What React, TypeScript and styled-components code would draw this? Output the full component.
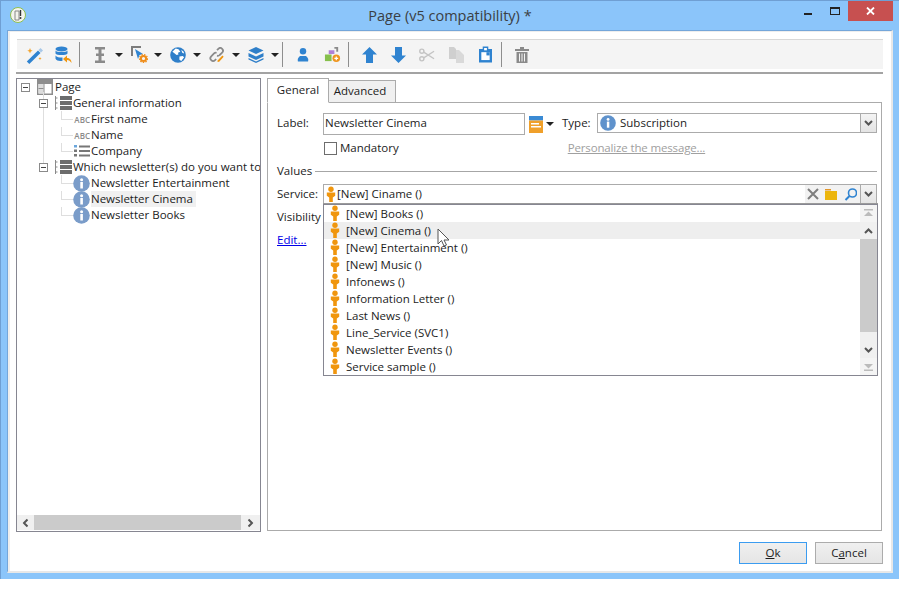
import React from "react";
import styled, { createGlobalStyle } from "styled-components";

const Global = createGlobalStyle`
  html, body { margin: 0; padding: 0; background: #fff; }
  body { width: 912px; height: 591px; overflow: hidden; font-family: "Open Sans", "Noto Sans", "Liberation Sans", sans-serif; font-size: 11.5px; color: #1c1c1c; }
`;

const Window = styled.div`
  width: 899px; height: 579px; box-sizing: border-box;
  background: #8bc5fa; border-top: 1px solid #6f9fd3; border-left: 1px solid #6f9fd3;
  display: flex; flex-direction: column; position: relative;
`;
const TitleBar = styled.div`
  height: 29px; flex: none; display: flex; align-items: flex-start; position: relative;
`;
const AppLogo = styled.svg`
  margin: 6px 0 0 9px; flex: none;
`;
const Title = styled.div`
  position: absolute; left: 0; right: 0; top: 5px; text-align: center; font-size: 14.5px; line-height: 20px; color: #3a3f44;
`;
const WinButtons = styled.div`
  margin-left: auto; display: flex; align-items: flex-start; margin-right: 6px;
`;
const MinBtn = styled.div`
  width: 8px; height: 2px; background: #222; margin: 12px 18px 0 0;
`;
const MaxBtn = styled.div`
  width: 8px; height: 5px; border: 1px solid #222; border-top-width: 2px; margin: 6px 8px 0 0;
`;
const CloseBtn = styled.div`
  width: 45px; height: 20px; background: #c75050; display: flex; align-items: center; justify-content: center;
`;

const Content = styled.div`
  flex: 1; margin: 0 6px 6px 6px; background: #fff; box-sizing: border-box; border-top: 1px solid #74a6da; border-left: 1px solid #74a6da;
  border-right: 2px solid #e8e8e8; border-bottom: 2px solid #e8e8e8; padding: 8px 8px 0 8px;
  display: flex; flex-direction: column; box-shadow: inset 2px 0 0 #eeeeee, inset 0 1px 0 #eeeeee;
`;
const ToolbarWrap = styled.div`
  height: 35px; flex: none; box-sizing: border-box; border-bottom: 2px solid #a3a3a3; padding-left: 1px;
`;
const Toolbar = styled.div`
  height: 30px; box-sizing: border-box; background: #f4f4f4; border-top: 1px solid #d8d8d8; display: flex; align-items: center; padding-left: 9px;
`;
const ToolIcon = styled.div<{ $w: number }>`
  width: ${(p) => p.$w}px; height: 22px; display: flex; align-items: center; justify-content: flex-start; flex: none;
`;
const Caret = styled.div<{ $mr?: number }>`
  width: 0; height: 0; border-left: 4px solid transparent; border-right: 4px solid transparent; border-top: 4px solid #222; flex: none; margin-right: ${(p) => p.$mr ?? 0}px;
`;
const ToolSep = styled.div<{ $mr?: number; $ml?: number }>`
  width: 1px; height: 25px; background: #8e8e8e; flex: none; margin-left: ${(p) => p.$ml ?? 0}px; margin-right: ${(p) => p.$mr ?? 0}px;
`;
const Main = styled.div`
  flex: none; display: flex; margin-top: 4px; height: 454px; gap: 6px;
`;
const TreePanel = styled.div`
  width: 245px; height: 454px; box-sizing: border-box; border: 1px solid #868691; display: flex; flex-direction: column; flex: none; background: #fff;
`;
const TreeBody = styled.div`
  flex: 1; overflow: hidden;
`;
const indent = [4, 22, 56];
const Row = styled.div<{ $level: number }>`
  height: 16px; display: flex; align-items: center; position: relative; white-space: nowrap; padding-left: ${(p) => indent[p.$level]}px;
`;
const Toggle = styled.div`
  width: 9px; height: 9px; box-sizing: border-box; border: 1px solid #8a8a8a; background: #fff; position: relative; flex: none; margin-right: 7px;
  &::after { content: ""; position: absolute; left: 1px; right: 1px; top: 3px; height: 1px; background: #444; }
`;
const Stub = styled.div<{ $w: number }>`
  width: ${(p) => p.$w}px; height: 1px; flex: none;
`;
const Guide = styled.div<{ $x: number; $top: number; $h: number; $w?: number }>`
  position: absolute; left: ${(p) => p.$x}px; top: ${(p) => p.$top}px; width: ${(p) => p.$w ?? 1}px; height: ${(p) => p.$h}px; background: #dedede;
`;
const TreeLabel = styled.span<{ $sel?: boolean }>`
  line-height: 16px; padding: 0 ${(p) => (p.$sel ? 3 : 0)}px 0 0; background: ${(p) => (p.$sel ? "#f0f0f0" : "transparent")};
`;
const HBar = styled.div`
  height: 15px; display: flex; background: #f0f0f0; flex: none; align-items: stretch; margin-bottom: 1px;
`;
const HBtn = styled.div<{ $w: number }>`
  width: ${(p) => p.$w}px; display: flex; align-items: center; justify-content: center; flex: none;
`;
const HThumb = styled.div`
  flex: 1; background: #cbcbcb;
`;
const Right = styled.div`
  width: 616px; flex: none; display: flex; flex-direction: column; position: relative;
`;
const TabBar = styled.div`
  display: flex; align-items: flex-end; height: 25px; margin-bottom: -1px; position: relative; z-index: 1; flex: none;
`;
const Tab = styled.div<{ $active?: boolean }>`
  box-sizing: border-box; height: ${(p) => (p.$active ? 25 : 23)}px; width: ${(p) => (p.$active ? 62 : 67)}px; display: flex; align-items: center; justify-content: center;
  background: ${(p) => (p.$active ? "#fff" : "#f0f0f0")}; border: 1px solid #ababab; border-bottom-color: ${(p) => (p.$active ? "#fff" : "#ababab")};
  border-left-width: ${(p) => (p.$active ? 1 : 0)}px; padding: 0 ${(p) => (p.$active ? 0 : 4)}px 2px 0;
`;
const TabPanel = styled.div`
  box-sizing: border-box; width: 615px; height: 429px; border: 1px solid #ababab; padding: 10px 4px 0 9px; display: flex; flex-direction: column; flex: none;
`;
const FormRow = styled.div<{ $h: number; $mt?: number }>`
  display: flex; align-items: center; height: ${(p) => p.$h}px; margin-top: ${(p) => p.$mt ?? 0}px; flex: none; white-space: nowrap;
`;
const FieldLabel = styled.span<{ $lift?: number }>`
  width: 46px; flex: none; padding-bottom: ${(p) => p.$lift ?? 2}px;
`;
const RowText = styled.span`
  padding-bottom: 2px;
`;
const TextInput = styled.div`
  width: 202px; height: 22px; box-sizing: border-box; border: 1px solid #ababab; padding: 0 0 4px 1px; display: flex; align-items: center; flex: none;
`;
const TypeLabel = styled.span`
  margin: 0 6px 0 8px; width: 29px; flex: none; padding-bottom: 4px;
`;
const Combo = styled.div<{ $w: number }>`
  width: ${(p) => p.$w}px; height: 20px; box-sizing: border-box; border: 1px solid #ababab; display: flex; align-items: center; flex: none; background: #fff;
  align-self: flex-start;
`;
const ComboText = styled.div<{ $gap: number }>`
  flex: 1; display: flex; align-items: center; gap: ${(p) => p.$gap}px; padding-left: 2px;
`;
const ComboArrow = styled.div`
  width: 16px; height: 100%; box-sizing: border-box; border-left: 1px solid #ababab; background: linear-gradient(#f4f4f4, #e4e4e4);
  display: flex; align-items: center; justify-content: center; flex: none;
`;
const ComboTools = styled.div`
  display: flex; align-items: center; gap: 6px; height: 100%; background: #f2f2f2; padding: 0 3px 0 2px; flex: none;
`;
const CheckBox = styled.div`
  width: 13px; height: 13px; box-sizing: border-box; border: 1px solid #6d6d6d; background: #fff; margin-left: 47px; margin-right: 3px; flex: none;
`;
const DisabledLink = styled.span`
  color: #a0a0a0; text-decoration: underline; margin-left: 169px; padding-bottom: 2px; letter-spacing: -0.15px;
`;
const SectionTitle = styled.div`
  display: flex; align-items: center; gap: 3px; height: 16px; margin-top: 7px; flex: none;
  span { padding-bottom: 2px; }
  &::after { content: ""; flex: 1; height: 1px; background: #a6a6a6; }
`;
const BlueLink = styled.a`
  color: #0000e8; text-decoration: underline; padding-bottom: 2px;
`;
const Dropdown = styled.div`
  position: absolute; left: 56px; top: 126px; width: 555px; height: 172px; box-sizing: border-box; background: #fff; border: 1px solid #868691; z-index: 3;
  display: flex; box-shadow: 0 -1px 0 #9a9a9a;
`;
const DropList = styled.div`
  flex: 1; display: flex; flex-direction: column;
`;
const DropItem = styled.div<{ $hover?: boolean }>`
  height: 17px; flex: none; display: flex; align-items: center; gap: 6px; padding-left: 6px; white-space: nowrap; background: ${(p) => (p.$hover ? "#eeeeee" : "transparent")};
`;
const VBar = styled.div`
  width: 17px; flex: none; display: flex; flex-direction: column; background: #f0f0f0;
`;
const VBtn = styled.div<{ $white?: boolean }>`
  height: 17px; flex: none; display: flex; align-items: center; justify-content: center; background: ${(p) => (p.$white ? "#f4f4f4" : "#f0f0f0")};
`;
const VThumb = styled.div`
  height: 93px; background: #cbcbcb; flex: none;
`;
const VTrack = styled.div`
  flex: 1;
`;
const Cursor = styled.svg`
  position: absolute; left: 170px; top: 150px; z-index: 4;
`;
const Footer = styled.div`
  flex: none; display: flex; justify-content: flex-end; gap: 8px; margin-top: 10px;
`;
const Btn = styled.div<{ $primary?: boolean }>`
  width: 68px; height: 22px; box-sizing: border-box; border: 1px solid ${(p) => (p.$primary ? "#3b9cf0" : "#acacac")}; background: linear-gradient(#f0f0f0, #e5e5e5);
  display: flex; align-items: center; justify-content: center; padding-bottom: 1px; u { text-underline-offset: 1px; }
`;
const AbcTag = styled.span`
  font-size: 8px; font-weight: 600; color: #8a8a8a; width: 17px; margin-right: 1px; flex: none; text-align: right;
`;

const Person = () => (
  <svg width="10" height="17" viewBox="0 0 10 17" style={{ flex: "none" }}>
    <circle cx="5" cy="3.200" r="2.700" fill="#f0960e" />
    <path d="M.8 6.500h8.400v3.200L6.800 11.500V16H3.200v-4.500L.8 9.700z" fill="#f0960e" />
  </svg>
);
const InfoIcon = ({ size = 17, fill = "#7a9cc9" }: { size?: number; fill?: string }) => (
  <svg width={size} height={size} viewBox="0 0 17 17" style={{ flex: "none" }}>
    <circle cx="8.500" cy="8.500" r="8.300" fill={fill} />
    <rect x="7.300" y="7" width="2.600" height="6.500" fill="#fff" />
    <circle cx="8.600" cy="4.700" r="1.500" fill="#fff" />
  </svg>
);
const Chevron = ({ dir = "down", color = "#555" }: { dir?: "up" | "down" | "left" | "right"; color?: string }) => {
  const r = { down: 0, up: 180, left: 90, right: -90 }[dir];
  return (
    <svg width="9" height="6" viewBox="0 0 9 6" style={{ transform: `rotate(${r}deg)` }}>
      <path d="M1 1l3.500 3.500L8 1" fill="none" stroke={color} strokeWidth="2" />
    </svg>
  );
};
const End = ({ down }: { down?: boolean }) => (
  <svg width="9" height="9" viewBox="0 0 9 9" style={{ transform: down ? "rotate(180deg)" : undefined }}>
    <rect x="0" y="0" width="9" height="1.500" fill="#bbb" />
    <path d="M4.500 2.500L9 7H0z" fill="#bbb" />
  </svg>
);

const Wand = () => (
  <svg width="18" height="18" viewBox="0 0 18 18">
    <path d="M.8 15.500L12 4.500l2.500 2.500L3.300 18z" fill="#2f83d0" />
    <path d="M12.500 4l2-2 2.500 2.500-2 2z" fill="#a8c8e8" />
    <path d="M4 2l.8 1.900 1.900.8-1.900.8L4 7.400l-.8-1.900-1.900-.8 1.900-.8z" fill="#f3a32c" />
    <path d="M14 11l.5 1.100 1.100.5-1.100.5-.5 1.100-.5-1.100-1.100-.5 1.100-.5z" fill="#f3a32c" />
  </svg>
);
const DbIcon = () => (
  <svg width="17" height="17" viewBox="0 0 17 17">
    <ellipse cx="6.500" cy="3" rx="6" ry="2.500" fill="#2f83d0" />
    <path d="M.5 4.500c1 2 11 2 12 0v3c-1 2-11 2-12 0z" fill="#2f83d0" />
    <path d="M.5 9.500c1 2 6 2.200 7 2v3.300c-3 .5-6 0-7-2z" fill="#2f83d0" />
    <path d="M16.500 17c0-3.500-2-5-4.500-5V9.500L8 13l4 3.400V14c2 0 3.200 1 4.500 3z" fill="#f0960e" />
  </svg>
);
const IBeam = () => (
  <svg width="12" height="16" viewBox="0 0 12 16">
    <path d="M1 0h10v2.500H7.500v4H10v2.500H7.500v4.500H11V16H1v-2.500h3.500V9H2V6.500h2.500v-4H1z" fill="#8a8a8a" />
  </svg>
);
const CursorGear = () => (
  <svg width="17" height="17" viewBox="0 0 17 17">
    <path d="M0 0h10v2H2v8H0z" fill="#7c7c7c" />
    <path d="M4 3l8 5-3.500 1L7 13z" fill="#2f83d0" />
    <circle cx="12.500" cy="12.500" r="2.600" fill="none" stroke="#ef8d1a" strokeWidth="2" />
    <circle cx="12.500" cy="12.500" r="4" fill="none" stroke="#ef8d1a" strokeWidth="1.200" strokeDasharray="1.500 1.200" />
  </svg>
);
const Globe = () => (
  <svg width="16" height="16" viewBox="0 0 17 17">
    <circle cx="8.500" cy="8.500" r="8.300" fill="#2f7fc9" />
    <path d="M6 1.500l3 1 2 2.500-2.500 1L9 8l-2 .5L4 6 2.500 5zM10 10l3.500-.5L15 11l-3 4-2-1.500zM12 3l2.500 2 .5 2-2-1z" fill="#fff" />
  </svg>
);
const LinkIcon = () => (
  <svg width="16" height="16" viewBox="0 0 18 18">
    <path d="M9 3.500l1.500-1.500a3 3 0 0 1 4.300 4.300L12 9a3 3 0 0 1-3 .8" fill="none" stroke="#8a8a8a" strokeWidth="2" />
    <path d="M8.500 6.500a3 3 0 0 0-2.800.8L2.500 10.500a3 3 0 0 0 4.300 4.300L8 13.500" fill="none" stroke="#8a8a8a" strokeWidth="2" />
    <path d="M10 15l5-5.500 1.500 1.500-5 5.500-2 .5z" fill="#f0960e" />
  </svg>
);
const Boxes = () => (
  <svg width="16" height="16" viewBox="0 0 16 16">
    <path d="M8 0l7.500 3.500L8 7 .5 3.500z" fill="#2f7fc9" />
    <path d="M.5 6L8 9.500 15.500 6v3.500L8 13 .5 9.500z" fill="#2f7fc9" />
    <path d="M.5 11L8 14.500 15.500 11v1.500L8 16 .5 12.500z" fill="#2f7fc9" />
  </svg>
);
const PersonBlue = () => (
  <svg width="12" height="15" viewBox="0 0 13 15">
    <circle cx="6.500" cy="4" r="3.500" fill="#2f83d0" />
    <path d="M1 15c-1-4 2-6 3-6h5c1 0 4 2 3 6z" fill="#2f83d0" />
  </svg>
);
const Shapes = () => (
  <svg width="17" height="17" viewBox="0 0 18 18">
    <rect x="1" y="9" width="7" height="7" fill="#86bf4c" />
    <rect x="5" y="4.500" width="6" height="4" fill="#b07fd6" />
    <path d="M11 1h4v5h-2V3h-2z" fill="#8a8a8a" />
    <circle cx="13" cy="13" r="4" fill="#ef951e" />
    <path d="M11 13h4M13 11v4" stroke="#fff" strokeWidth="1.300" />
  </svg>
);
const ArrowV = ({ down }: { down?: boolean }) => (
  <svg width="15" height="16" viewBox="0 0 15 16" style={{ transform: down ? "rotate(180deg)" : undefined }}>
    <path d="M7.500 0L15 7.500h-4V16H4V7.500H0z" fill="#2f83d0" />
  </svg>
);
const Scissors = () => (
  <svg width="16" height="14" viewBox="0 0 17 14">
    <circle cx="3" cy="3" r="2.200" fill="none" stroke="#c4c4c4" strokeWidth="1.500" />
    <circle cx="3" cy="11" r="2.200" fill="none" stroke="#c4c4c4" strokeWidth="1.500" />
    <path d="M5 4l11 7M5 10l11-7" stroke="#c4c4c4" strokeWidth="1.500" />
  </svg>
);
const CopyIcon = () => (
  <svg width="15" height="16" viewBox="0 0 15 16">
    <path d="M0 0h5l2 2v10H0z" fill="#cfcfcf" />
    <path d="M7 3h3l5 5v8H7z" fill="#d9d9d9" />
  </svg>
);
const Clipboard = () => (
  <svg width="13" height="17" viewBox="0 0 14 17">
    <path d="M0 2.500h4V0h6v2.500h4V17H0z" fill="#2f83d0" />
    <rect x="5.500" y="1.500" width="3" height="2.500" fill="#fff" />
    <rect x="2.500" y="6" width="9" height="8.500" fill="#fff" />
    <path d="M8 6h3.500v3.500H8z" fill="#2f83d0" />
  </svg>
);
const Trash = () => (
  <svg width="14" height="16" viewBox="0 0 14 16">
    <path d="M0 2h5V0h4v2h5v2H0z" fill="#8a8a8a" />
    <path d="M1.500 5h11v11h-11z" fill="#8a8a8a" />
    <path d="M4.500 6.500v8M7 6.500v8M9.500 6.500v8" stroke="#f4f4f4" strokeWidth="1" />
  </svg>
);
const PageIcon = () => (
  <svg width="16" height="16" viewBox="0 0 16 16" style={{ flex: "none" }}>
    <rect width="16" height="16" fill="#8d8d8d" />
    <rect x="1.500" y="5" width="13" height="9.500" fill="#fff" />
    <rect x="1.500" y="5" width="5" height="9.500" fill="#dcdcdc" />
    <rect x="6.500" y="5" width="1" height="9.500" fill="#8d8d8d" />
    <rect x="1.500" y="9" width="5" height="1" fill="#8d8d8d" />
  </svg>
);
const GroupIcon = () => (
  <svg width="17" height="16" viewBox="0 0 17 16" style={{ flex: "none" }}>
    <path d="M.5 1v14M.5 3h2M.5 8h2M.5 13h2" stroke="#8a8a8a" strokeWidth="1" />
    <rect x="5" y="1" width="12" height="4" fill="#6c6c6c" />
    <rect x="5" y="6" width="12" height="4" fill="#6c6c6c" />
    <rect x="5" y="11" width="12" height="4" fill="#6c6c6c" />
  </svg>
);
const ListIcon = () => (
  <svg width="18" height="12" viewBox="0 0 18 12" style={{ flex: "none" }}>
    <rect x="1" y="0" width="3" height="2.500" fill="#6aa6dc" />
    <rect x="1" y="4.500" width="3" height="2.500" fill="#777" />
    <rect x="1" y="9" width="3" height="2.500" fill="#777" />
    <rect x="6" y="0.500" width="11" height="2" fill="#777" />
    <rect x="6" y="5" width="11" height="2" fill="#777" />
    <rect x="6" y="9.500" width="11" height="2" fill="#777" />
  </svg>
);
const ListPick = () => (
  <svg width="14" height="17" viewBox="0 0 14 17" style={{ flex: "none" }}>
    <rect width="14" height="4.500" fill="#3a8ad4" />
    <rect y="4.500" width="14" height="12.500" fill="#f0a02a" />
    <rect x="2" y="7" width="8" height="1.500" fill="#fff" />
    <rect x="2" y="10" width="10" height="1.500" fill="#fff" />
  </svg>
);
const CloseX = () => (
  <svg width="9" height="8" viewBox="0 0 9 8">
    <path d="M1 .5l7 7M8 .5l-7 7" stroke="#fff" strokeWidth="1.800" />
  </svg>
);
const ClearX = () => (
  <svg width="12" height="12" viewBox="0 0 12 12">
    <path d="M1 1l10 10M11 1L1 11" stroke="#7e7e7e" strokeWidth="2" />
  </svg>
);
const Folder = () => (
  <svg width="12" height="11" viewBox="0 0 12 11">
    <path d="M0 0h6v1.500H0z" fill="#e2962a" />
    <path d="M0 2h12v9H0z" fill="#ecb50c" />
  </svg>
);
const Search = () => (
  <svg width="14" height="13" viewBox="0 0 14 13">
    <circle cx="9.500" cy="5" r="4" fill="none" stroke="#2f83d0" strokeWidth="1.600" />
    <path d="M6.500 8l-4 4" stroke="#2f83d0" strokeWidth="2" />
  </svg>
);

const services = [
  "[New] Books ()", "[New] Cinema ()", "[New] Entertainment ()", "[New] Music ()", "Infonews ()",
  "Information Letter ()", "Last News ()", "Line_Service (SVC1)", "Newsletter Events ()", "Service sample ()",
];

export default function App() {
  return (
    <>
      <Global />
      <Window>
        <TitleBar>
          <AppLogo width="16" height="16" viewBox="0 0 16 16">
            <circle cx="8" cy="8" r="7.500" fill="#f4f4ee" stroke="#8fbf4f" />
            <path d="M5 4h4v9H5z" fill="none" stroke="#888" />
            <path d="M10.500 3v6" stroke="#333" strokeWidth="1.400" />
            <circle cx="10.500" cy="11" r="1" fill="#333" />
          </AppLogo>
          <Title>Page (v5 compatibility) *</Title>
          <WinButtons>
            <MinBtn />
            <MaxBtn />
            <CloseBtn><CloseX /></CloseBtn>
          </WinButtons>
        </TitleBar>
        <Content>
          <ToolbarWrap>
            <Toolbar>
              <ToolIcon $w={29}><Wand /></ToolIcon>
              <ToolIcon $w={24}><DbIcon /></ToolIcon>
              <ToolSep $mr={14} />
              <ToolIcon $w={21}><IBeam /></ToolIcon>
              <Caret $mr={8} />
              <ToolIcon $w={23}><CursorGear /></ToolIcon>
              <Caret $mr={8} />
              <ToolIcon $w={23}><Globe /></ToolIcon>
              <Caret $mr={8} />
              <ToolIcon $w={23}><LinkIcon /></ToolIcon>
              <Caret $mr={8} />
              <ToolIcon $w={23}><Boxes /></ToolIcon>
              <Caret />
              <ToolSep $ml={3} $mr={14} />
              <ToolIcon $w={27}><PersonBlue /></ToolIcon>
              <ToolIcon $w={24}><Shapes /></ToolIcon>
              <ToolSep $mr={13} />
              <ToolIcon $w={29}><ArrowV /></ToolIcon>
              <ToolIcon $w={28}><ArrowV down /></ToolIcon>
              <ToolIcon $w={30}><Scissors /></ToolIcon>
              <ToolIcon $w={30}><CopyIcon /></ToolIcon>
              <ToolIcon $w={22}><Clipboard /></ToolIcon>
              <ToolSep $mr={13} />
              <ToolIcon $w={29}><Trash /></ToolIcon>
            </Toolbar>
          </ToolbarWrap>
          <Main>
            <TreePanel>
              <TreeBody>
                <Row $level={0}><Guide $x={26} $top={13} $h={71} /><Toggle /><PageIcon /><Stub $w={2} /><TreeLabel>Page</TreeLabel></Row>
                <Row $level={1}><Toggle /><GroupIcon /><Stub $w={1} /><TreeLabel>General information</TreeLabel></Row>
                <Row $level={2}><Guide $x={44} $top={0} $h={8} /><Guide $x={44} $top={8} $h={1} $w={12} /><AbcTag>ABC</AbcTag><TreeLabel>First name</TreeLabel></Row>
                <Row $level={2}><Guide $x={44} $top={0} $h={8} /><Guide $x={44} $top={8} $h={1} $w={12} /><AbcTag>ABC</AbcTag><TreeLabel>Name</TreeLabel></Row>
                <Row $level={2}><Guide $x={44} $top={0} $h={8} /><Guide $x={44} $top={8} $h={1} $w={12} /><ListIcon /><TreeLabel>Company</TreeLabel></Row>
                <Row $level={1}><Toggle /><GroupIcon /><Stub $w={1} /><TreeLabel>Which newsletter(s) do you want to</TreeLabel></Row>
                <Row $level={2}><Guide $x={44} $top={0} $h={8} /><Guide $x={44} $top={8} $h={1} $w={12} /><InfoIcon /><Stub $w={1} /><TreeLabel>Newsletter Entertainment</TreeLabel></Row>
                <Row $level={2}><Guide $x={44} $top={0} $h={8} /><Guide $x={44} $top={8} $h={1} $w={12} /><InfoIcon /><Stub $w={1} /><TreeLabel $sel>Newsletter Cinema</TreeLabel></Row>
                <Row $level={2}><Guide $x={44} $top={0} $h={8} /><Guide $x={44} $top={8} $h={1} $w={12} /><InfoIcon /><Stub $w={1} /><TreeLabel>Newsletter Books</TreeLabel></Row>
              </TreeBody>
              <HBar>
                <HBtn $w={17}><Chevron dir="left" /></HBtn>
                <HThumb />
                <HBtn $w={19}><Chevron dir="right" /></HBtn>
              </HBar>
            </TreePanel>
            <Right>
              <TabBar>
                <Tab $active>General</Tab>
                <Tab>Advanced</Tab>
              </TabBar>
              <TabPanel>
                <FormRow $h={22}>
                  <FieldLabel $lift={4}>Label:</FieldLabel>
                  <TextInput>Newsletter Cinema</TextInput>
                  <Stub $w={4} />
                  <ListPick />
                  <Stub $w={3} />
                  <Caret />
                  <TypeLabel>Type:</TypeLabel>
                  <Combo $w={280}>
                    <ComboText $gap={4}><InfoIcon size={16} fill="#5f92cc" /><RowText>Subscription</RowText></ComboText>
                    <ComboArrow><Chevron /></ComboArrow>
                  </Combo>
                </FormRow>
                <FormRow $h={16} $mt={5}>
                  <CheckBox />
                  <RowText>Mandatory</RowText>
                  <DisabledLink>Personalize the message...</DisabledLink>
                </FormRow>
                <SectionTitle><span>Values</span></SectionTitle>
                <FormRow $h={20} $mt={5}>
                  <FieldLabel>Service:</FieldLabel>
                  <Combo $w={554}>
                    <ComboText $gap={1}><Person /><RowText>[New] Ciname ()</RowText></ComboText>
                    <ComboTools><ClearX /><Folder /><Search /></ComboTools>
                    <ComboArrow><Chevron /></ComboArrow>
                  </Combo>
                </FormRow>
                <FormRow $h={16} $mt={5}><RowText>Visibility</RowText></FormRow>
                <FormRow $h={16} $mt={7}><BlueLink>Edit...</BlueLink></FormRow>
              </TabPanel>
              <Dropdown>
                <DropList>
                  {services.map((s, i) => (
                    <DropItem key={s} $hover={i === 1}><Person />{s}</DropItem>
                  ))}
                </DropList>
                <VBar>
                  <VBtn $white><End /></VBtn>
                  <VBtn><Chevron dir="up" /></VBtn>
                  <VThumb />
                  <VTrack />
                  <VBtn><Chevron /></VBtn>
                  <VBtn $white><End down /></VBtn>
                </VBar>
              </Dropdown>
              <Cursor width="13" height="20" viewBox="0 0 13 20">
                <path d="M1 1v15l3.500-3.500L7 18l2.500-1-2.500-5h5z" fill="#fff" stroke="#555" strokeWidth="1" />
              </Cursor>
            </Right>
          </Main>
          <Footer>
            <Btn $primary><span><u>O</u>k</span></Btn>
            <Btn><span>C<u>a</u>ncel</span></Btn>
          </Footer>
        </Content>
      </Window>
    </>
  );
}
